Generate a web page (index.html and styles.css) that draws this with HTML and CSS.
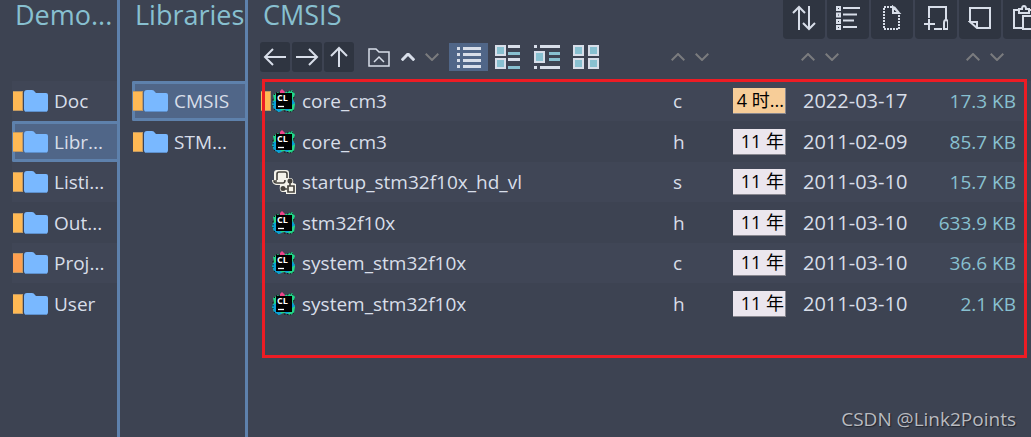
FILE: index.html
```html
<!DOCTYPE html>
<html lang="en">
<head>
<meta charset="utf-8">
<title>CMSIS</title>
<link rel="stylesheet" href="styles.css">
</head>
<body>
<svg class="defs" aria-hidden="true">
  <symbol id="folder" viewBox="0 0 24 22"><path d="M0 3Q0 0 3 0H8Q10 0 11 2L12 3H22Q24 3 24 5V19Q24 22 21 22H3Q0 22 0 19Z" fill="#79b8ff"/><path d="M1 21.5H23" stroke="#5e90cc"/></symbol>
  <symbol id="up" viewBox="0 0 14 8"><path d="M.7 7.3 7 1l6.300 6.300" fill="none" stroke="currentColor"/></symbol>
  <symbol id="down" viewBox="0 0 14 8"><path d="M.7 .7 7 7 13.300 .7" fill="none" stroke="currentColor"/></symbol>
  <symbol id="clion" viewBox="0 0 24 24">
    <path d="M1 6 6 3 9 5 14 3 20 1 23 5 21 10 23 15 22 21 19 23 12 21 6 23 2 20 0 15 2 10Z" fill="#21d789"/>
    <path d="M0 13 5 11V17L10 22 6 23 2 20ZM12 20h6l-3 2Z" fill="#0b9fd9"/>
    <path d="M20 10l3 4-3 2Z" fill="#079ad6"/>
    <path d="M8 2 10 0 13 3 12 5H8Z" fill="#f0458c"/>
    <path d="M2 6 5 3 8 4M15 3l5-1.500 2 3M1 10v7M2 20l4 3M12 22l6 1 4-2M22 8l-1 3" fill="none" stroke="#15181d" stroke-dasharray="1.500 1.500"/>
    <path d="M4 4H20V20H4Z" fill="#000"/>
    <text x="5" y="12" class="clion-text">CL</text>
    <path d="M6 17.500H12" stroke="#fff" stroke-width="1.300"/>
  </symbol>
  <symbol id="asm" viewBox="0 0 24 24">
    <path d="M2 3Q2 0 5 0H14Q17 0 17 3V8H19Q22 9 21 13L24 14V24H14V22H10Q7 21 8 15H4Q0 14 0 10H2Z" fill="#f4f2ea"/>
    <path d="M5 10V4Q5 2 7 2H13Q15 2 15 4V8M5 11H2Q2 13 5 13H11Q13 13 13 10M18 12V16M11 19H15" fill="none" stroke="#45433e" stroke-width="1.600"/>
    <circle cx="18" cy="11" r="2.500" fill="#45433e"/><circle cx="11" cy="18.500" r="2.500" fill="#45433e"/>
    <path d="M16 16H22V22H16Z" fill="#f4f2ea" stroke="#45433e" stroke-width="1.700"/>
  </symbol>
</svg>
<div class="app">
  <nav class="pane" aria-label="Demo">
    <h2 class="title">Demo...</h2>
    <ul class="folders">
      <li><a class="folder" href="#"><span class="tag"></span><svg class="folder-icon"><use href="#folder"/></svg>Doc</a></li>
      <li><a class="folder selected" href="#"><span class="tag"></span><svg class="folder-icon"><use href="#folder"/></svg>Libr...</a></li>
      <li><a class="folder" href="#"><span class="tag"></span><svg class="folder-icon"><use href="#folder"/></svg>Listi...</a></li>
      <li><a class="folder" href="#"><span class="tag"></span><svg class="folder-icon"><use href="#folder"/></svg>Out...</a></li>
      <li><a class="folder" href="#"><span class="tag recent"></span><svg class="folder-icon"><use href="#folder"/></svg>Proj...</a></li>
      <li><a class="folder" href="#"><span class="tag"></span><svg class="folder-icon"><use href="#folder"/></svg>User</a></li>
    </ul>
  </nav>
  <nav class="pane wide" aria-label="Libraries">
    <h2 class="title">Libraries</h2>
    <ul class="folders">
      <li><a class="folder selected" href="#"><span class="tag"></span><svg class="folder-icon"><use href="#folder"/></svg>CMSIS</a></li>
      <li><a class="folder" href="#"><span class="tag"></span><svg class="folder-icon"><use href="#folder"/></svg>STM...</a></li>
    </ul>
  </nav>
  <main class="main">
    <header class="header">
      <h1 class="title">CMSIS</h1>
      <div class="actions">
        <button class="action" aria-label="Sort"><svg width="24" height="26" viewBox="0 0 24 26"><path d="M7 25V2M1 8 7 2l6 6M17 1V24M11 18l6 6 6-6"/></svg></button>
        <button class="action" aria-label="Select"><svg width="24" height="26" viewBox="0 0 24 26"><path d="M1 2h3v3H1ZM1 8.500h3v3H1ZM1 15h3v3H1ZM1 21h3v3H1ZM7 3H24M7 9.500H21M7 15.500H18M7 22H21"/></svg></button>
        <button class="action" aria-label="New file"><svg width="24" height="26" viewBox="0 0 24 26"><path d="M12 2H4V24H19V9" stroke-dasharray="2 1"/><path d="M13 2V8H19ZM14 2 19 8"/></svg></button>
        <button class="action" aria-label="Add item"><svg width="24" height="26" viewBox="0 0 24 26"><path d="M5 13V2H22V15M10 24H18M5 14V25M0 19H11M20 24V18Q20 15 22 15T24 18V24Z"/></svg></button>
        <button class="action" aria-label="Note"><svg width="24" height="26" viewBox="0 0 24 26"><path d="M2 17V3H22V23H9L2 17H9V23"/></svg></button>
        <button class="action" aria-label="Paste"><svg width="24" height="26" viewBox="0 0 24 26"><path d="M10 23H2V5H7M17 5H21V10M7 8V4H10Q10 1 12 1T14 4H17V8ZM11 11H24V24H11Z"/></svg></button>
      </div>
    </header>
    <div class="listing">
      <table class="files">
        <colgroup><col><col class="col-ext"><col class="col-age"><col class="col-date"><col class="col-size"></colgroup>
        <thead>
          <tr>
            <th>
              <div class="toolbar">
                <div class="nav-group">
                  <button class="nav" aria-label="Back"><svg width="24" height="24" viewBox="0 0 24 24"><path d="M23 12H2M10 4 2 12l8 8"/></svg></button>
                  <button class="nav" aria-label="Forward"><svg width="24" height="24" viewBox="0 0 24 24"><path d="M1 12H22M14 4l8 8-8 8"/></svg></button>
                  <button class="nav" aria-label="Up"><svg width="24" height="24" viewBox="0 0 24 24"><path d="M12 22V3M4 11l8-8 8 8"/></svg></button>
                </div>
                <div class="sorts">
                  <button class="plain bright" aria-label="Parent folder"><svg width="22" height="20" viewBox="0 0 22 20"><path d="M1 19V2H8L11 5H21V19ZM6 15l5-5 5 5" fill="none" stroke="currentColor" stroke-width="1.500"/></svg></button>
                  <span class="pair">
                    <button class="plain bright" aria-label="Name ascending"><svg class="caret bold"><use href="#up"/></svg></button>
                    <button class="plain" aria-label="Name descending"><svg class="caret"><use href="#down"/></svg></button>
                  </span>
                </div>
                <div class="views">
                  <button class="view active" aria-label="List"><svg width="26" height="24" viewBox="0 0 26 24"><path d="M1 2h3v3H1ZM7 2H25V5H7ZM1 8h3v3H1ZM7 8H25v3H7ZM1 14h3v3H1ZM7 14H25v3H7ZM1 20h3v3H1ZM7 20H25v3H7Z" fill="#d8dee9"/></svg></button>
                  <button class="view" aria-label="Tiles"><svg width="26" height="24" viewBox="0 0 26 24"><path d="M0 0H11V11H0ZM13 0H25V3H13ZM0 13H11V24H0ZM13 13H25v3H13Z" fill="#d8dee9"/><path d="M2 2H9V9H2ZM2 15H9v7H2ZM13 7H25v3H13ZM13 21H25v3H13Z" fill="#88c0d0"/></svg></button>
                  <button class="view" aria-label="Content"><svg width="26" height="24" viewBox="0 0 26 24"><path d="M0 0H3V3H0ZM6 0H26V3H6ZM0 6H11V18H0ZM0 21H3v3H0ZM6 21H26v3H6Z" fill="#d8dee9"/><path d="M2 8H9v8H2ZM15 7H26v3H15ZM15 13H26v3H15Z" fill="#88c0d0"/></svg></button>
                  <button class="view" aria-label="Icons"><svg width="26" height="24" viewBox="0 0 26 24"><path d="M0 0H11V11H0ZM15 0H26V11H15ZM0 13H11V24H0ZM15 13H26V24H15Z" fill="#d8dee9"/><path d="M2 2H9V9H2ZM17 2h7v7H17ZM2 15H9v7H2ZM17 15h7v7H17Z" fill="#88c0d0"/></svg></button>
                </div>
              </div>
            </th>
            <th><span class="pair"><button class="plain" aria-label="Extension ascending"><svg class="caret"><use href="#up"/></svg></button><button class="plain" aria-label="Extension descending"><svg class="caret"><use href="#down"/></svg></button></span></th>
            <th></th>
            <th><span class="pair"><button class="plain" aria-label="Date ascending"><svg class="caret"><use href="#up"/></svg></button><button class="plain" aria-label="Date descending"><svg class="caret"><use href="#down"/></svg></button></span></th>
            <th><span class="pair end"><button class="plain" aria-label="Size ascending"><svg class="caret"><use href="#up"/></svg></button><button class="plain" aria-label="Size descending"><svg class="caret"><use href="#down"/></svg></button></span></th>
          </tr>
        </thead>
        <tbody>
          <tr><td><div class="file"><span class="tag"></span><svg class="file-icon"><use href="#clion"/></svg>core_cm3</div></td><td class="ext">c</td><td><span class="age new">4 时...</span></td><td class="date">2022-03-17</td><td class="size">17.3 KB</td></tr>
          <tr><td><div class="file"><span class="tag none"></span><svg class="file-icon"><use href="#clion"/></svg>core_cm3</div></td><td class="ext">h</td><td><span class="age">11 年</span></td><td class="date">2011-02-09</td><td class="size">85.7 KB</td></tr>
          <tr><td><div class="file"><span class="tag none"></span><svg class="file-icon"><use href="#asm"/></svg>startup_stm32f10x_hd_vl</div></td><td class="ext">s</td><td><span class="age">11 年</span></td><td class="date">2011-03-10</td><td class="size">15.7 KB</td></tr>
          <tr><td><div class="file"><span class="tag none"></span><svg class="file-icon"><use href="#clion"/></svg>stm32f10x</div></td><td class="ext">h</td><td><span class="age">11 年</span></td><td class="date">2011-03-10</td><td class="size">633.9 KB</td></tr>
          <tr><td><div class="file"><span class="tag none"></span><svg class="file-icon"><use href="#clion"/></svg>system_stm32f10x</div></td><td class="ext">c</td><td><span class="age">11 年</span></td><td class="date">2011-03-10</td><td class="size">36.6 KB</td></tr>
          <tr><td><div class="file"><span class="tag none"></span><svg class="file-icon"><use href="#clion"/></svg>system_stm32f10x</div></td><td class="ext">h</td><td><span class="age">11 年</span></td><td class="date">2011-03-10</td><td class="size">2.1 KB</td></tr>
        </tbody>
      </table>
      <div class="highlight"></div>
    </div>
    <footer class="watermark">CSDN @Link2Points</footer>
  </main>
</div>
</body>
</html>
```
FILE: styles.css
```css
* { box-sizing: border-box; }
body {
  margin: 0;
  background: #3d4352;
  color: #d8dee9;
  font: 19px/26px "Open Sans", "Noto Sans CJK SC", sans-serif;
}
svg { display: block; flex: none; }
button { border: 0; padding: 0; background: none; color: inherit; font: inherit; }
.defs { position: absolute; width: 0; height: 0; }
.app { display: flex; min-height: 100vh; }

.pane { flex: none; width: 120px; padding-left: 12px; border-right: 3px solid #5e81ac; }
.pane.wide { width: 128px; }
.title {
  height: 39px;
  margin: 0;
  padding-left: 3px;
  color: #88c0d0;
  font-size: 27px;
  font-weight: 400;
  line-height: 30px;
  white-space: nowrap;
}
.folders { list-style: none; margin: 42px 0 0; padding: 0; }
.folders li { height: 40px; }
.folders li:nth-child(even) { height: 41px; }
.folders li:nth-child(odd), .files tbody tr:nth-child(odd) { background: #404656; }
.folder {
  display: flex;
  align-items: center;
  height: 100%;
  padding-left: 1px;
  color: inherit;
  text-decoration: none;
  white-space: nowrap;
}
.folder.selected {
  background: #506688;
  box-shadow: inset 3px 0 #5e81ac, inset 0 3px #5e81ac, inset 0 -3px #5e81ac;
  border-radius: 2px 0 0 2px;
}
.tag { flex: none; width: 10px; height: 20px; margin-right: 1px; background: #ffb954; border: 1px solid #c39a62; border-width: 1px 1px 1px 0; }
.tag.recent { background: #ffa050; }
.tag.none { visibility: hidden; }
.folder-icon { width: 24px; height: 22px; margin-right: 6px; }

.main { display: flex; flex-direction: column; flex: 1; min-width: 0; }
.header { display: flex; justify-content: space-between; padding-left: 12px; }
.actions { display: flex; gap: 2px; width: 248px; overflow: hidden; }
.action {
  display: flex;
  flex: none;
  align-items: center;
  justify-content: center;
  width: 42px;
  height: 39px;
  padding-bottom: 4px;
  background: #2f3541;
  border-radius: 0 0 4px 4px;
}
.action svg, .nav svg { fill: none; stroke: #d8dee9; stroke-width: 2; }

.listing { position: relative; padding-left: 12px; }
.files { width: 100%; table-layout: fixed; border-collapse: collapse; }
.files th, .files td { padding: 0; font-weight: 400; text-align: left; white-space: nowrap; }
.files th { height: 42px; vertical-align: middle; }
.files tbody td { height: 40px; }
.files tbody tr:nth-child(even) td { height: 41px; }
.col-ext { width: 62px; }
.col-age { width: 68px; }
.col-date { width: 120px; }
.col-size { width: 110px; }

.toolbar { display: flex; align-items: center; padding-bottom: 6px; }
.nav-group { display: flex; gap: 2px; }
.nav { display: flex; align-items: center; justify-content: center; width: 30px; height: 30px; background: #2f3541; border-radius: 3px; }
.sorts { display: flex; align-items: center; gap: 11px; margin: 0 10px 0 14px; }
.pair { display: flex; gap: 10px; padding-bottom: 6px; }
.sorts .pair { padding-bottom: 0; }
.pair.end { justify-content: flex-end; padding-right: 27px; }
.plain { color: #7a7b7e; }
.plain.bright { color: #d8dee9; }
.caret { width: 14px; height: 8px; stroke-width: 2; }
.caret.bold { stroke-width: 3; }
.views { display: flex; }
.view { display: flex; align-items: center; justify-content: center; width: 39px; height: 28px; }
.view.active { background: #506688; }

.file { display: flex; align-items: center; padding-left: 1px; }
.file-icon { width: 24px; height: 24px; margin-right: 6px; }
.clion-text { fill: #fff; font: bold 9px "Open Sans", sans-serif; }
.files .ext { padding-left: 2px; }
.age {
  display: block;
  width: 53px;
  height: 26px;
  padding: 0 1px;
  background: #ebe6ee;
  border: 1px solid #88878f;
  border-width: 0 1px 1px 0;
  color: #000;
  font-size: 18px;
  line-height: 25px;
  text-align: right;
}
.age.new { background: #f7cd98; }
.files .date { padding-left: 2px; font-size: 20px; }
.files .size { padding-right: 15px; color: #88c0d0; text-align: right; }

.highlight { position: absolute; top: 40px; right: 4px; bottom: -34px; left: 14px; border: 3px solid #ed1c24; pointer-events: none; }
.watermark {
  margin-top: auto;
  padding: 0 15px 4px 0;
  color: #b9bbc0;
  font: 19px/28px "Open Sans", sans-serif;
  text-align: right;
  text-shadow: 1px 1px 1px #22252d;
}
```
